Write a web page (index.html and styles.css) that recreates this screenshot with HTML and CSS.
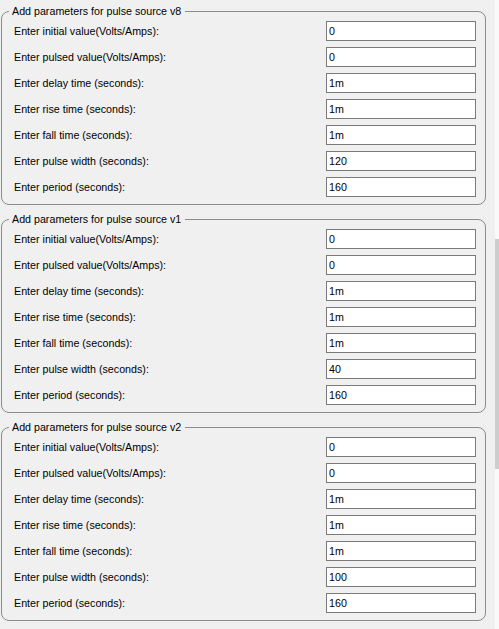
FILE: index.html
```html
<!DOCTYPE html>
<html>
<head>
<meta charset="utf-8">
<link rel="stylesheet" href="styles.css">
</head>
<body>
<div class="page">
  <fieldset class="group">
    <legend class="title">Add parameters for pulse source v8</legend>
    <div class="rows">
      <label class="lbl">Enter initial value(Volts/Amps):</label><input class="field" value="0">
      <label class="lbl">Enter pulsed value(Volts/Amps):</label><input class="field" value="0">
      <label class="lbl">Enter delay time (seconds):</label><input class="field" value="1m">
      <label class="lbl">Enter rise time (seconds):</label><input class="field" value="1m">
      <label class="lbl">Enter fall time (seconds):</label><input class="field" value="1m">
      <label class="lbl">Enter pulse width (seconds):</label><input class="field" value="120">
      <label class="lbl">Enter period (seconds):</label><input class="field" value="160">
    </div>
  </fieldset>
  <fieldset class="group">
    <legend class="title">Add parameters for pulse source v1</legend>
    <div class="rows">
      <label class="lbl">Enter initial value(Volts/Amps):</label><input class="field" value="0">
      <label class="lbl">Enter pulsed value(Volts/Amps):</label><input class="field" value="0">
      <label class="lbl">Enter delay time (seconds):</label><input class="field" value="1m">
      <label class="lbl">Enter rise time (seconds):</label><input class="field" value="1m">
      <label class="lbl">Enter fall time (seconds):</label><input class="field" value="1m">
      <label class="lbl">Enter pulse width (seconds):</label><input class="field" value="40">
      <label class="lbl">Enter period (seconds):</label><input class="field" value="160">
    </div>
  </fieldset>
  <fieldset class="group">
    <legend class="title">Add parameters for pulse source v2</legend>
    <div class="rows">
      <label class="lbl">Enter initial value(Volts/Amps):</label><input class="field" value="0">
      <label class="lbl">Enter pulsed value(Volts/Amps):</label><input class="field" value="0">
      <label class="lbl">Enter delay time (seconds):</label><input class="field" value="1m">
      <label class="lbl">Enter rise time (seconds):</label><input class="field" value="1m">
      <label class="lbl">Enter fall time (seconds):</label><input class="field" value="1m">
      <label class="lbl">Enter pulse width (seconds):</label><input class="field" value="100">
      <label class="lbl">Enter period (seconds):</label><input class="field" value="160">
    </div>
  </fieldset>
</div>
<div class="scrollbar"><div class="thumb"></div></div>
</body>
</html>
```
FILE: styles.css
```css
html, body {
  margin: 0;
  padding: 0;
  background: #f0f0f0;
  height: 100%;
  overflow: hidden;
}
body {
  font-family: "Liberation Sans", Arial, sans-serif;
  font-size: 10.7px;
  color: #000;
}
.page {
  width: 485px;
  margin-left: 1px;
  padding-top: 4px;
  display: flex;
  flex-direction: column;
  gap: 7px;
}
.group {
  margin: 0;
  border: 1px solid #8c8c8c;
  border-radius: 8px;
  padding: 3px 9px 7px 12px;
  min-width: 0;
}
.title {
  margin-left: -5px;
  padding: 0 4px 0 3px;
  line-height: 14px;
  font-size: 10.7px;
}
.rows {
  display: grid;
  grid-template-columns: 1fr 150px;
  row-gap: 6px;
  align-items: center;
}
.lbl {
  line-height: 14px;
}
.field {
  box-sizing: border-box;
  width: 150px;
  height: 20px;
  margin: 0;
  border: 1px solid #7a7a7a;
  background: #fff;
  padding: 0 2px;
  font-family: "Liberation Sans", Arial, sans-serif;
  font-size: 10.7px;
  color: #000;
  outline: none;
}
.scrollbar {
  position: absolute;
  top: 0;
  right: 0;
  width: 4px;
  height: 629px;
  background: #f9f9f9;
}
.thumb {
  margin-top: 239px;
  height: 230px;
  background: #cdcdcd;
}
```
